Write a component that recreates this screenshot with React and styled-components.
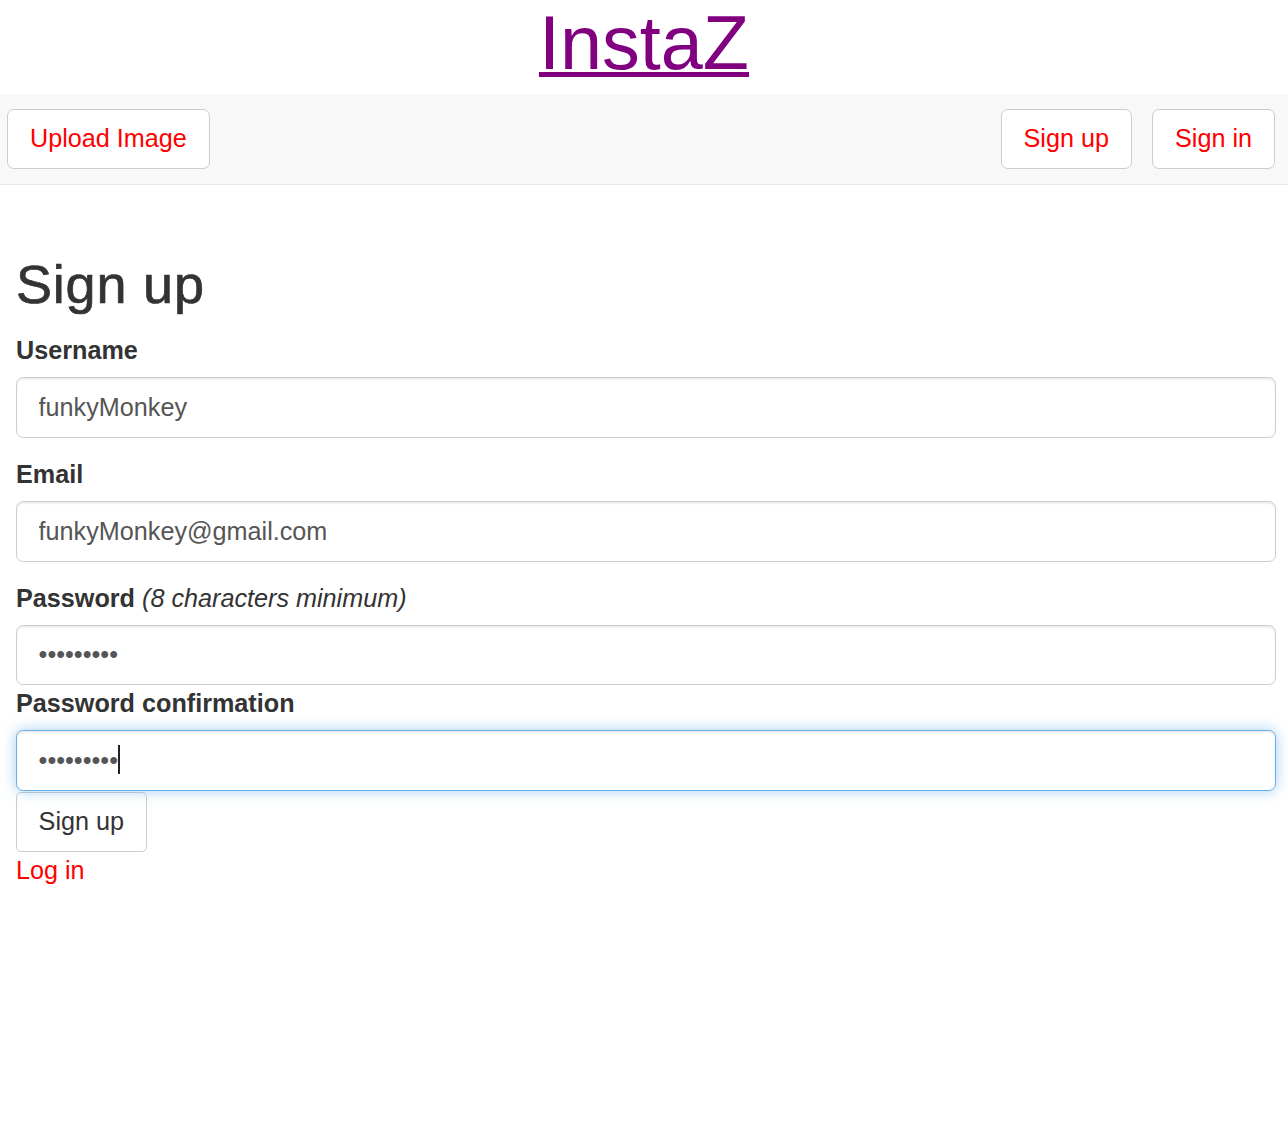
import React from "react";
import styled, { createGlobalStyle } from "styled-components";

const Global = createGlobalStyle`
  html, body { margin: 0; padding: 0; background: #fff; }
  body {
    font-family: "Liberation Sans", Arial, Helvetica, sans-serif;
    font-size: 25.2px;
    line-height: 1.42857;
    color: #333;
  }
  * { box-sizing: border-box; }
`;

const Header = styled.header`
  height: 94px;
  text-align: center;
`;

const Brand = styled.a`
  font-size: 75.6px;
  line-height: normal;
  color: #800080;
  text-decoration: underline;
  text-decoration-thickness: 5px;
  text-underline-offset: 3px;
`;

const NavBar = styled.nav`
  height: 91px;
  background: #f8f8f8;
  border-bottom: 1px solid #e7e7e7;
  display: flex;
  align-items: flex-start;
  justify-content: space-between;
  padding: 15px 13px 0 7px;
`;

const NavGroup = styled.div`
  display: flex;
  gap: 20px;
`;

const NavButton = styled.a`
  display: inline-flex;
  align-items: center;
  height: 60px;
  padding: 0 22px 2px;
  background: #fff;
  border: 1.8px solid #ccc;
  border-radius: 7px;
  color: #f00;
  font-size: 25.2px;
  text-decoration: none;
`;

const Main = styled.main`
  padding: 36px 12px 0 16px;
`;

const Heading = styled.h2`
  font-size: 54px;
  font-weight: 500;
  line-height: 1.1;
  letter-spacing: 0.8px;
  -webkit-text-stroke: 0.7px #333;
  margin: 34px 0 18px;
  color: #333;
`;

const Field = styled.div`
  margin-bottom: ${(p) => (p.$tight ? "0" : "18px")};
`;

const Label = styled.label`
  display: block;
  font-weight: bold;
  margin-bottom: 9px;
  line-height: 36px;
`;

const Hint = styled.em`
  font-weight: normal;
`;

const InputWrap = styled.div`
  position: relative;
`;

const Input = styled.input`
  display: block;
  width: 100%;
  height: 60.6px;
  padding: 0 21.6px;
  font-family: "Liberation Sans", Arial, sans-serif;
  font-size: 25.2px;
  color: #555;
  background: #fff;
  border: 1.8px solid ${(p) => (p.$focused ? "#66afe9" : "#ccc")};
  border-radius: 7.2px;
  outline: none;
  box-shadow: ${(p) =>
    p.$focused
      ? "inset 0 1.8px 1.8px rgba(0,0,0,.075), 0 0 14px rgba(102,175,233,.6)"
      : "inset 0 1.8px 1.8px rgba(0,0,0,.075)"};
`;

const Caret = styled.span`
  position: absolute;
  left: 102px;
  top: 15px;
  width: 2px;
  height: 29px;
  background: #222;
`;

const SubmitButton = styled.button`
  display: block;
  margin-top: 1px;
  height: 60px;
  padding: 0 21.6px;
  font-family: "Liberation Sans", Arial, sans-serif;
  font-size: 25.2px;
  color: #333;
  background: #fff;
  border: 1.8px solid #ccc;
  border-radius: 5px;
`;

const LoginLink = styled.a`
  display: inline-block;
  color: #f00;
  text-decoration: none;
  line-height: 36px;
`;

export default function App() {
  return (
    <>
      <Global />
      <Header>
        <Brand href="#">InstaZ</Brand>
      </Header>
      <NavBar>
        <NavButton href="#">Upload Image</NavButton>
        <NavGroup>
          <NavButton href="#">Sign up</NavButton>
          <NavButton href="#">Sign in</NavButton>
        </NavGroup>
      </NavBar>
      <Main>
        <Heading>Sign up</Heading>
        <Field>
          <Label>Username</Label>
          <Input type="text" defaultValue="funkyMonkey" readOnly />
        </Field>
        <Field>
          <Label>Email</Label>
          <Input type="email" defaultValue="funkyMonkey@gmail.com" readOnly />
        </Field>
        <Field $tight>
          <Label>
            Password <Hint>(8 characters minimum)</Hint>
          </Label>
          <Input type="password" defaultValue="123456789" readOnly />
        </Field>
        <Field $tight>
          <Label>Password confirmation</Label>
          <InputWrap>
            <Input type="password" defaultValue="123456789" readOnly $focused />
            <Caret />
          </InputWrap>
        </Field>
        <SubmitButton>Sign up</SubmitButton>
        <LoginLink href="#">Log in</LoginLink>
      </Main>
    </>
  );
}
